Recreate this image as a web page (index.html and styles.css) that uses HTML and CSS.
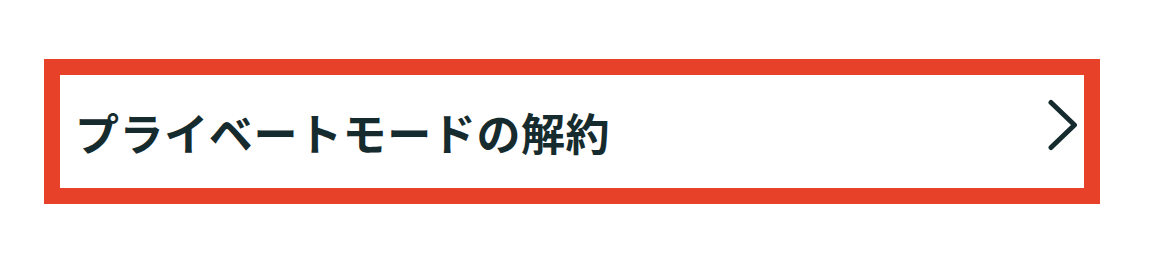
FILE: index.html
```html
<!DOCTYPE html>
<html lang="ja">
<head>
<meta charset="utf-8">
<link rel="stylesheet" href="styles.css">
</head>
<body>
<div class="page">
  <a class="menu-item" href="#">
    <span class="label">プライベートモードの解約</span>
    <svg class="chevron" width="34" height="52" viewBox="0 0 34 52" aria-hidden="true">
      <path d="M6 3.5 L29.5 26 L6 48.5" fill="none" stroke="#162b2e" stroke-width="5" stroke-linecap="round" stroke-linejoin="round"/>
    </svg>
  </a>
</div>
</body>
</html>
```

FILE: styles.css
```css
html, body {
  margin: 0;
  padding: 0;
  background: #ffffff;
}

.page {
  padding: 59px 0 0 44px;
}

.menu-item {
  box-sizing: border-box;
  width: 1056px;
  height: 145px;
  border: 16px solid #e8412a;
  display: flex;
  align-items: center;
  justify-content: space-between;
  padding: 0 5px 0 15px;
  text-decoration: none;
  background: #ffffff;
}

.label {
  font-family: "Noto Sans CJK JP", "Noto Sans", sans-serif;
  font-weight: 700;
  font-size: 44px;
  letter-spacing: 0.6px;
  line-height: 1;
  color: #162b2e;
}

.chevron {
  display: block;
  margin-bottom: 14px;
}
```
